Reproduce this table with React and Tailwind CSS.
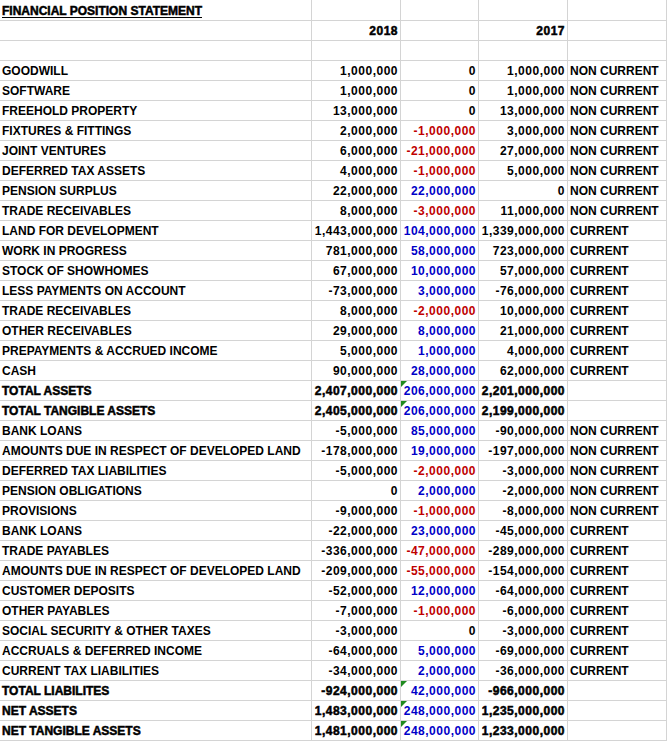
const rows = [
  ['GOODWILL', '1,000,000', '0', '1,000,000', 'NON CURRENT'],
  ['SOFTWARE', '1,000,000', '0', '1,000,000', 'NON CURRENT'],
  ['FREEHOLD PROPERTY', '13,000,000', '0', '13,000,000', 'NON CURRENT'],
  ['FIXTURES & FITTINGS', '2,000,000', '-1,000,000', '3,000,000', 'NON CURRENT'],
  ['JOINT VENTURES', '6,000,000', '-21,000,000', '27,000,000', 'NON CURRENT'],
  ['DEFERRED TAX ASSETS', '4,000,000', '-1,000,000', '5,000,000', 'NON CURRENT'],
  ['PENSION SURPLUS', '22,000,000', '22,000,000', '0', 'NON CURRENT'],
  ['TRADE RECEIVABLES', '8,000,000', '-3,000,000', '11,000,000', 'NON CURRENT'],
  ['LAND FOR DEVELOPMENT', '1,443,000,000', '104,000,000', '1,339,000,000', 'CURRENT'],
  ['WORK IN PROGRESS', '781,000,000', '58,000,000', '723,000,000', 'CURRENT'],
  ['STOCK OF SHOWHOMES', '67,000,000', '10,000,000', '57,000,000', 'CURRENT'],
  ['LESS PAYMENTS ON ACCOUNT', '-73,000,000', '3,000,000', '-76,000,000', 'CURRENT'],
  ['TRADE RECEIVABLES', '8,000,000', '-2,000,000', '10,000,000', 'CURRENT'],
  ['OTHER RECEIVABLES', '29,000,000', '8,000,000', '21,000,000', 'CURRENT'],
  ['PREPAYMENTS & ACCRUED INCOME', '5,000,000', '1,000,000', '4,000,000', 'CURRENT'],
  ['CASH', '90,000,000', '28,000,000', '62,000,000', 'CURRENT'],
  ['TOTAL ASSETS', '2,407,000,000', '206,000,000', '2,201,000,000', '', true],
  ['TOTAL TANGIBLE ASSETS', '2,405,000,000', '206,000,000', '2,199,000,000', '', true],
  ['BANK LOANS', '-5,000,000', '85,000,000', '-90,000,000', 'NON CURRENT'],
  ['AMOUNTS DUE IN RESPECT OF DEVELOPED LAND', '-178,000,000', '19,000,000', '-197,000,000', 'NON CURRENT'],
  ['DEFERRED TAX LIABILITIES', '-5,000,000', '-2,000,000', '-3,000,000', 'NON CURRENT'],
  ['PENSION OBLIGATIONS', '0', '2,000,000', '-2,000,000', 'NON CURRENT'],
  ['PROVISIONS', '-9,000,000', '-1,000,000', '-8,000,000', 'NON CURRENT'],
  ['BANK LOANS', '-22,000,000', '23,000,000', '-45,000,000', 'CURRENT'],
  ['TRADE PAYABLES', '-336,000,000', '-47,000,000', '-289,000,000', 'CURRENT'],
  ['AMOUNTS DUE IN RESPECT OF DEVELOPED LAND', '-209,000,000', '-55,000,000', '-154,000,000', 'CURRENT'],
  ['CUSTOMER DEPOSITS', '-52,000,000', '12,000,000', '-64,000,000', 'CURRENT'],
  ['OTHER PAYABLES', '-7,000,000', '-1,000,000', '-6,000,000', 'CURRENT'],
  ['SOCIAL SECURITY & OTHER TAXES', '-3,000,000', '0', '-3,000,000', 'CURRENT'],
  ['ACCRUALS & DEFERRED INCOME', '-64,000,000', '5,000,000', '-69,000,000', 'CURRENT'],
  ['CURRENT TAX LIABILITIES', '-34,000,000', '2,000,000', '-36,000,000', 'CURRENT'],
  ['TOTAL LIABILITES', '-924,000,000', '42,000,000', '-966,000,000', '', true],
  ['NET ASSETS', '1,483,000,000', '248,000,000', '1,235,000,000', '', true],
  ['NET TANGIBLE ASSETS', '1,481,000,000', '248,000,000', '1,233,000,000', '', true]
];

// heavier look for the total rows
const heavy = '[-webkit-text-stroke:0.5px_#000]';

function Cell({ children, right, first, className = '' }) {
  return (
    <div
      className={`relative flex items-end pb-[2px] border-r border-b border-[#d4d4d4] leading-[14px] whitespace-nowrap ${
        first ? 'h-[21px]' : 'h-5'
      } ${right ? 'justify-end pr-[2px] tracking-[0.5px]' : 'pl-[2px]'} ${className}`}
    >
      {children}
    </div>
  );
}

function diffColor(v) {
  if (v === '0') return 'text-black';
  return v.startsWith('-') ? 'text-[#c00000]' : 'text-[#0000c8]';
}

export default function App() {
  return (
    <div className="w-[667px] h-[742px] bg-white overflow-hidden font-['Liberation_Sans',Arial,sans-serif] text-[12px] font-bold text-black">
      <div className="grid grid-cols-[312px_89px_78px_89px_99px]">
        <Cell first>
          <span className={`underline underline-offset-[2px] ${heavy}`}>FINANCIAL POSITION STATEMENT</span>
        </Cell>
        <Cell first />
        <Cell first />
        <Cell first />
        <Cell first />

        <Cell />
        <Cell right><span className={heavy}>2018</span></Cell>
        <Cell />
        <Cell right><span className={heavy}>2017</span></Cell>
        <Cell />

        <Cell />
        <Cell />
        <Cell />
        <Cell />
        <Cell />

        {rows.map(([label, a, d, b, kind, total], i) => (
          <div key={i} className="contents">
            <Cell><span className={total ? heavy : ''}>{label}</span></Cell>
            <Cell right><span className={total ? heavy : ''}>{a}</span></Cell>
            <Cell right className={diffColor(d)}>
              {total && (
                <span className="absolute left-0 top-0 w-0 h-0 border-t-[6px] border-r-[6px] border-t-[#1f8a1f] border-r-transparent" />
              )}
              <span>{d}</span>
            </Cell>
            <Cell right><span className={total ? heavy : ''}>{b}</span></Cell>
            <Cell>{kind}</Cell>
          </div>
        ))}
      </div>
    </div>
  );
}
